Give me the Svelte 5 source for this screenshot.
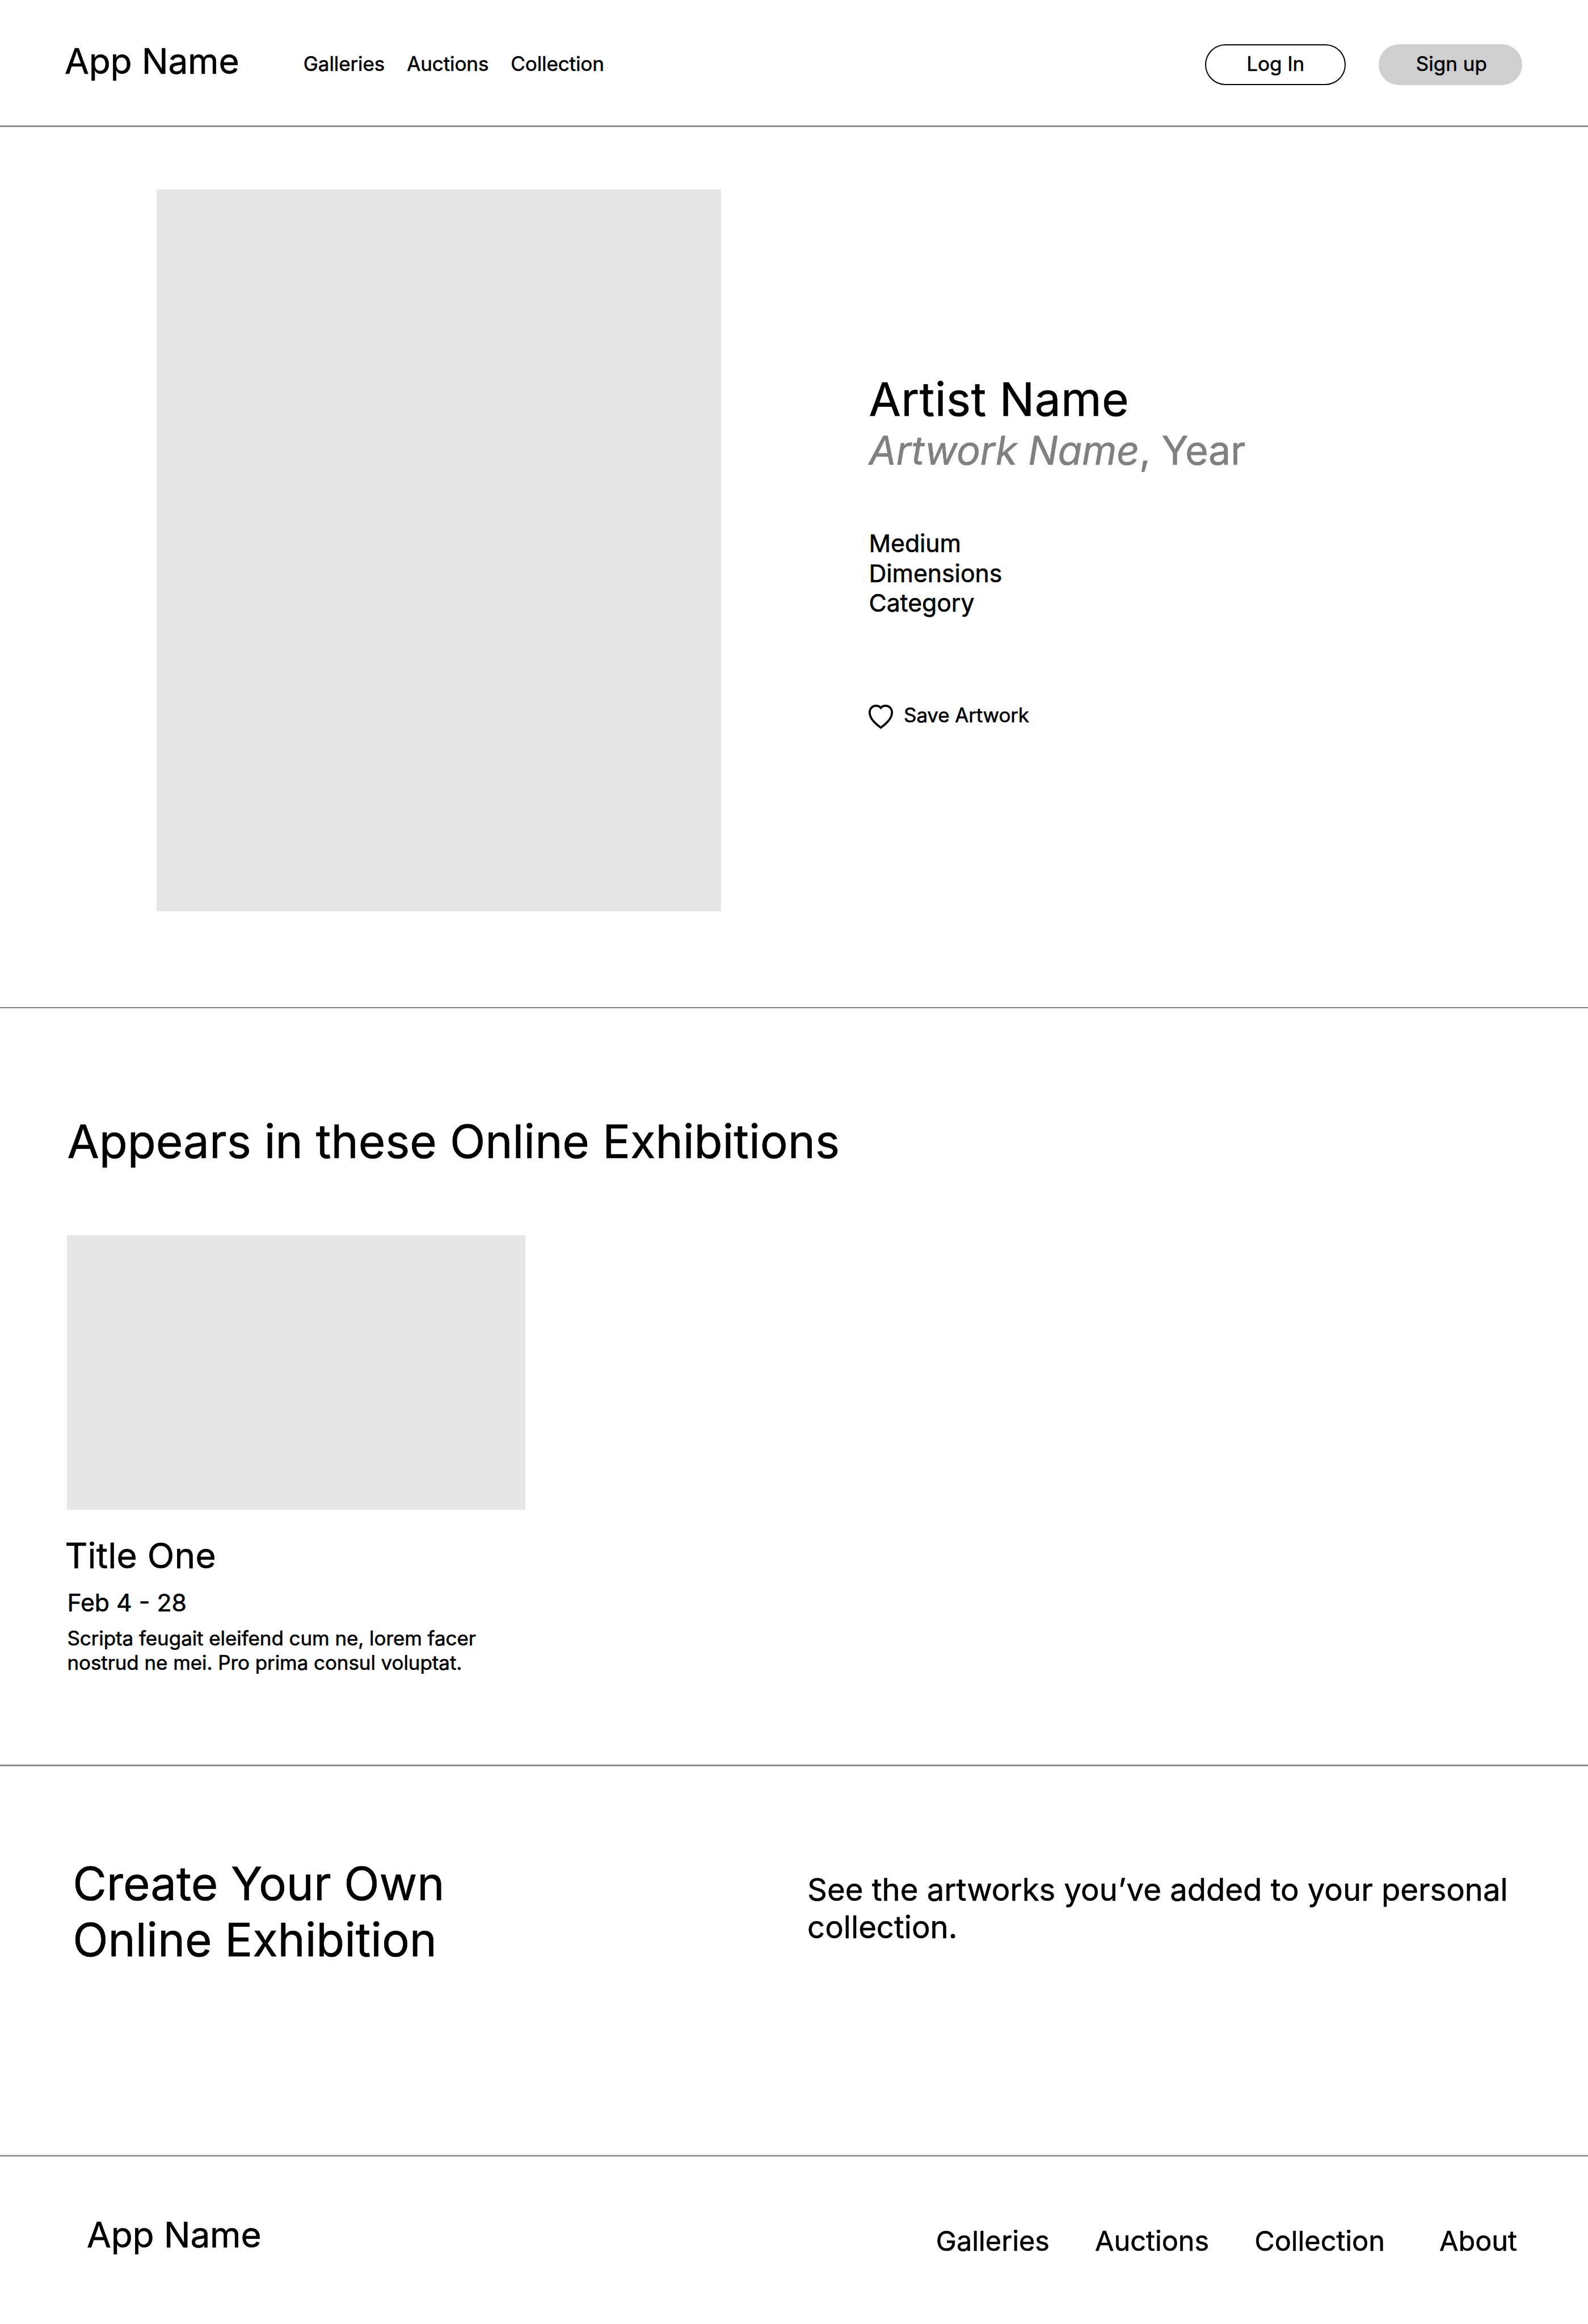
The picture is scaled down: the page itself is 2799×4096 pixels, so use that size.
<script>
  const navLinks = ['Galleries', 'Auctions', 'Collection'];
  const footerLinks = ['Galleries', 'Auctions', 'Collection', 'About'];
  const details = ['Medium', 'Dimensions', 'Category'];
</script>

<div class="page">
  <header class="header">
    <div class="logo">App Name</div>
    <nav class="nav">
      {#each navLinks as link}
        <span class="link">{link}</span>
      {/each}
    </nav>
    <div class="actions">
      <button class="btn outline">Log In</button>
      <button class="btn filled">Sign up</button>
    </div>
  </header>

  <main>
    <section class="hero">
      <div class="artwork-image"></div>
      <div class="info">
        <h1>Artist Name</h1>
        <p class="artwork"><em>Artwork Name</em>, Year</p>
        <ul class="details">
          {#each details as detail}
            <li>{detail}</li>
          {/each}
        </ul>
        <button class="save">
          <svg class="heart" viewBox="0 0 186 184" aria-hidden="true">
            <path
              d="M93 23.5C84 12 72 7.5 56 7.5C28 7.5 8 28 8 58C8 98 44 139 93 174.2C142 139 178 98 178 58C178 28 158 7.5 130 7.5C114 7.5 102 12 93 23.5Z"
              fill="none"
              stroke="#000"
              stroke-width="16"
            />
          </svg>
          <span>Save Artwork</span>
        </button>
      </div>
    </section>

    <section class="exhibitions">
      <h2>Appears in these Online Exhibitions</h2>
      <article class="card">
        <div class="thumb"></div>
        <h3>Title One</h3>
        <p class="dates">Feb 4 - 28</p>
        <p class="summary">Scripta feugait eleifend cum ne, lorem facer<br />nostrud ne mei. Pro prima consul voluptat.</p>
      </article>
    </section>

    <section class="create">
      <h2>Create Your Own<br />Online Exhibition</h2>
      <p>See the artworks you’ve added to your personal<br />collection.</p>
    </section>
  </main>

  <footer class="footer">
    <div class="logo">App Name</div>
    <nav class="footer-nav">
      {#each footerLinks as link}
        <span class="link">{link}</span>
      {/each}
    </nav>
  </footer>
</div>

<style>
  :global(body) {
    margin: 0;
    background: #fff;
  }

  .page,
  .page * {
    box-sizing: border-box;
  }

  .page {
    width: 2799px;
    height: 4096px;
    overflow: hidden;
    background: #fff;
    color: #000;
    font-family: Inter, 'Liberation Sans', sans-serif;
    font-weight: 400;
    -webkit-text-stroke: 0.6px currentColor;
  }

  h1,
  h2,
  h3,
  p,
  ul {
    margin: 0;
    padding: 0;
    font-weight: 400;
    white-space: nowrap;
  }

  button {
    margin: 0;
    padding: 0;
    border: 0;
    background: none;
    color: inherit;
    font: inherit;
  }

  .logo {
    font-size: 62.2px;
    line-height: 76px;
    letter-spacing: -0.2px;
    white-space: nowrap;
  }

  .header {
    display: flex;
    align-items: flex-start;
    height: 224px;
    padding: 70.2px 116.2px 0 114px;
    border-bottom: 3px solid #8b8b8b;
  }

  .nav {
    display: flex;
    gap: 39px;
    margin: 20.6px 0 0 113.4px;
    font-size: 35px;
    line-height: 42px;
    letter-spacing: -0.1px;
  }

  .actions {
    display: flex;
    gap: 57.6px;
    margin: 7.5px 0 0 auto;
  }

  .btn {
    height: 72px;
    border-radius: 36px;
    font-size: 35px;
    line-height: 42px;
  }

  .outline {
    width: 248px;
    padding-bottom: 4px;
    border: 2px solid #000;
  }

  .filled {
    width: 253px;
    padding: 0 0 4px 4px;
    background: #cfcfcf;
  }

  .hero {
    display: flex;
    align-items: flex-start;
    gap: 260px;
    height: 1553px;
    padding: 110px 0 0 275.7px;
    border-bottom: 2px solid #808080;
  }

  .artwork-image {
    flex: none;
    width: 995.8px;
    height: 1272px;
    background: #e6e6e6;
  }

  .info {
    margin-top: 321.5px;
  }

  h1 {
    font-size: 81.65px;
    line-height: 96px;
    letter-spacing: 0.4px;
  }

  .artwork {
    color: #808080;
    font-size: 70px;
    line-height: 83px;
    letter-spacing: -0.35px;
  }

  .details {
    margin-top: 97.8px;
    list-style: none;
    font-size: 42.76px;
    line-height: 52.5px;
    letter-spacing: -0.05px;
  }

  .save {
    display: flex;
    align-items: flex-start;
    gap: 18.6px;
    margin-top: 149.6px;
    font-size: 35px;
    line-height: 42px;
    letter-spacing: -0.15px;
  }

  .heart {
    width: 43px;
    height: 43px;
    margin-top: 2.4px;
  }

  .exhibitions {
    height: 1336px;
    padding: 185.5px 0 0 118.4px;
    border-bottom: 3px solid #8b8b8b;
  }

  h2 {
    font-size: 81.65px;
    line-height: 98px;
  }

  .card {
    width: 807.3px;
    margin-top: 116.6px;
  }

  .thumb {
    height: 484px;
    background: #e6e6e6;
  }

  h3 {
    margin: 42.7px 0 0 -4.2px;
    font-size: 62.2px;
    line-height: 76px;
    letter-spacing: 0.2px;
  }

  .dates {
    margin-top: 19px;
    font-size: 42.76px;
    line-height: 52px;
  }

  .summary {
    margin-top: 15.7px;
    font-size: 35px;
    line-height: 42.8px;
    letter-spacing: -0.08px;
  }

  .create {
    display: grid;
    grid-template-columns: 1294.8px 1fr;
    height: 688px;
    padding: 157.3px 0 0 128.3px;
    border-bottom: 3px solid #999;
  }

  .create h2 {
    line-height: 99.1px;
    letter-spacing: -0.15px;
  }

  .create p {
    margin-top: 26.3px;
    font-size: 54.42px;
    line-height: 66.1px;
  }

  .footer {
    display: flex;
    align-items: flex-start;
    justify-content: space-between;
    height: 295px;
    padding: 100.4px 125px 0 153px;
  }

  .footer-nav {
    display: flex;
    gap: 80px;
    margin-top: 20px;
    font-size: 48.6px;
    line-height: 58px;
  }

  .footer-nav .link:last-child {
    margin-left: 16px;
  }
</style>
